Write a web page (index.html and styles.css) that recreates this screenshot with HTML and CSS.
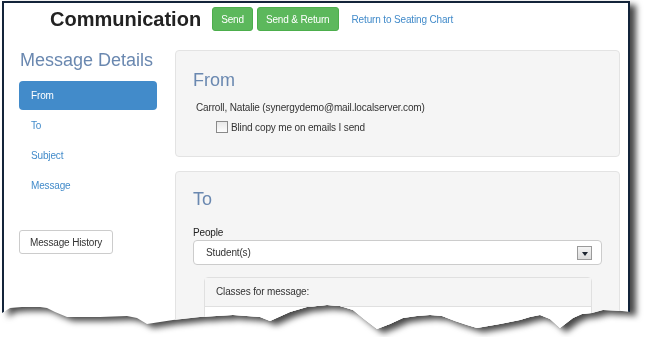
FILE: index.html
```html
<!DOCTYPE html>
<html lang="en">
<head>
  <meta charset="UTF-8" />
  <title>Communication</title>
  <link rel="stylesheet" href="styles.css">
</head>
<body>
  <div class="sheet">
    <div class="frame">

      <!-- Top bar -->
      <div class="topbar">
        <h1>Communication</h1>
        <button class="btn btn-green">Send</button>
        <button class="btn btn-green">Send &amp; Return</button>
        <a class="top-link" href="#">Return to Seating Chart</a>
      </div>

      <div class="layout">
        <aside class="sidebar">
          <h2>Message Details</h2>
          <ul class="nav">
            <li class="active"><a href="#">From</a></li>
            <li><a href="#">To</a></li>
            <li><a href="#">Subject</a></li>
            <li><a href="#">Message</a></li>
          </ul>
          <button class="btn btn-default">Message History</button>
        </aside>

        <main class="content">
          <section class="panel">
            <h3>From</h3>
            <div class="sender">Carroll, Natalie (synergydemo@mail.localserver.com)</div>
            <label class="check-row">
              <input type="checkbox" class="check" />
              <span>Blind copy me on emails I send</span>
            </label>
          </section>

          <section class="panel">
            <h3>To</h3>
            <div class="field-label">People</div>
            <div class="select">
              <span>Student(s)</span>
              <span class="select-btn"><span class="caret"></span></span>
            </div>
            <div class="subpanel">
              <div class="subpanel-head">Classes for message:</div>
              <div class="subpanel-body"></div>
            </div>
          </section>
        </main>
      </div>

    </div>
  </div>
</body>
</html>
```

FILE: styles.css
```css
body {
  margin: 0;
  background: #fff;
  font-family: "Liberation Sans", Arial, sans-serif;
  font-size: 10px;
  letter-spacing: -0.15px;
  color: #333;
}

.sheet {
  padding: 1px 0 0 2px;
  filter: drop-shadow(6px 4px 3px rgba(0, 0, 0, 0.72));
}

.frame {
  box-sizing: border-box;
  width: 628px;
  height: 336px;
  border: 2px solid #13243a;
  border-bottom: none;
  background: #fff;
  overflow: hidden;
  clip-path: polygon(0 0, 628px 0, 628px 311px, 620px 310px, 601px 309px, 590px 312px,
    580px 313px, 571px 317px, 558px 327px, 548px 318px, 538px 314px, 528px 316px,
    518px 319px, 498px 323px, 475px 327px, 465px 324px, 453px 320px, 440px 315px,
    428px 314px, 415px 315px, 401px 317px, 388px 323px, 375px 328px, 362px 318px,
    351px 309px, 338px 305px, 325px 304px, 305px 306px, 288px 311px, 268px 320px,
    258px 316px, 231px 314px, 198px 316px, 171px 319px, 145px 323px, 135px 317px,
    125px 315px, 98px 316px, 65px 316px, 53px 311px, 45px 307px, 38px 306px,
    20px 306px, 8px 307px, 0 312px);
}

/* Top bar */
.topbar {
  display: flex;
  align-items: center;
  height: 24px;
  margin-top: 4px;
  padding-left: 46px;
}

.topbar h1 {
  margin: 0 11px 0 0;
  font-size: 20px;
  letter-spacing: 0;
  font-weight: bold;
  color: #222;
}

.btn {
  font-family: inherit;
  font-size: 10px;
  letter-spacing: -0.15px;
  border-radius: 3px;
  cursor: pointer;
}

.btn-green {
  height: 24px;
  margin-right: 4px;
  padding: 0 8px;
  background: #5cb85c;
  border: 1px solid #4cae4c;
  color: #fff;
}

.top-link {
  margin-left: 9px;
  color: #428bca;
  text-decoration: none;
}

/* Columns */
.layout {
  display: flex;
  gap: 18px;
  margin-top: 19px;
  padding-left: 15px;
}

.sidebar {
  width: 138px;
  flex-shrink: 0;
}

.sidebar h2 {
  margin: 0 0 11px 1px;
  font-size: 18px;
  line-height: 20px;
  font-weight: normal;
  letter-spacing: 0;
  color: #6a88b0;
}

.nav {
  list-style: none;
  margin: 0;
  padding: 0;
}

.nav li a {
  display: block;
  height: 30px;
  line-height: 30px;
  padding-left: 12px;
  border-radius: 4px;
  color: #428bca;
  text-decoration: none;
}

.nav li.active a {
  height: 29px;
  line-height: 30px;
  margin-bottom: 1px;
  background: #428bca;
  color: #fff;
}

.btn-default {
  height: 24px;
  margin-top: 29px;
  padding: 0 10px;
  background: #fff;
  border: 1px solid #ccc;
  color: #333;
}

.content {
  width: 445px;
}

/* Panels */
.panel {
  background: #f5f5f5;
  border: 1px solid #e3e3e3;
  border-radius: 4px;
  padding: 19px 17px 22px;
  margin-bottom: 14px;
}

.panel h3 {
  margin: 0;
  font-size: 18px;
  line-height: 20px;
  font-weight: normal;
  letter-spacing: 0;
  color: #6a88b0;
}

.panel + .panel {
  padding-top: 17px;
}

.sender {
  margin: 11px 0 0 3px;
  line-height: 14px;
}

.check-row {
  display: flex;
  align-items: center;
  height: 14px;
  margin: 5px 0 0 23px;
}

.check {
  appearance: none;
  width: 12px;
  height: 12px;
  margin: 0 3px 0 0;
  border: 1px solid #8a8a8a;
  background: linear-gradient(#e8e8e8, #fdfdfd);
}

.field-label {
  margin-top: 17px;
  line-height: 14px;
  color: #222;
}

.select {
  display: flex;
  align-items: center;
  justify-content: space-between;
  box-sizing: border-box;
  height: 25px;
  padding: 0 9px 0 12px;
  background: #fff;
  border: 1px solid #ccc;
  border-radius: 4px;
}

.select-btn {
  display: flex;
  align-items: center;
  justify-content: center;
  box-sizing: border-box;
  width: 15px;
  height: 14px;
  border: 1px solid #9a9a9a;
  background: linear-gradient(#f4f4f4, #dcdcdc);
}

.caret {
  width: 0;
  height: 0;
  margin-top: 2px;
  border-left: 3px solid transparent;
  border-right: 3px solid transparent;
  border-top: 4px solid #1d2530;
}

.subpanel {
  margin: 12px 10px 0 11px;
  border: 1px solid #e0e0e0;
  border-radius: 4px;
  background: #fff;
}

.subpanel-head {
  height: 28px;
  line-height: 28px;
  padding-left: 11px;
  background: #f5f5f5;
  border-bottom: 1px solid #e0e0e0;
}

.subpanel-body {
  height: 60px;
}
```
